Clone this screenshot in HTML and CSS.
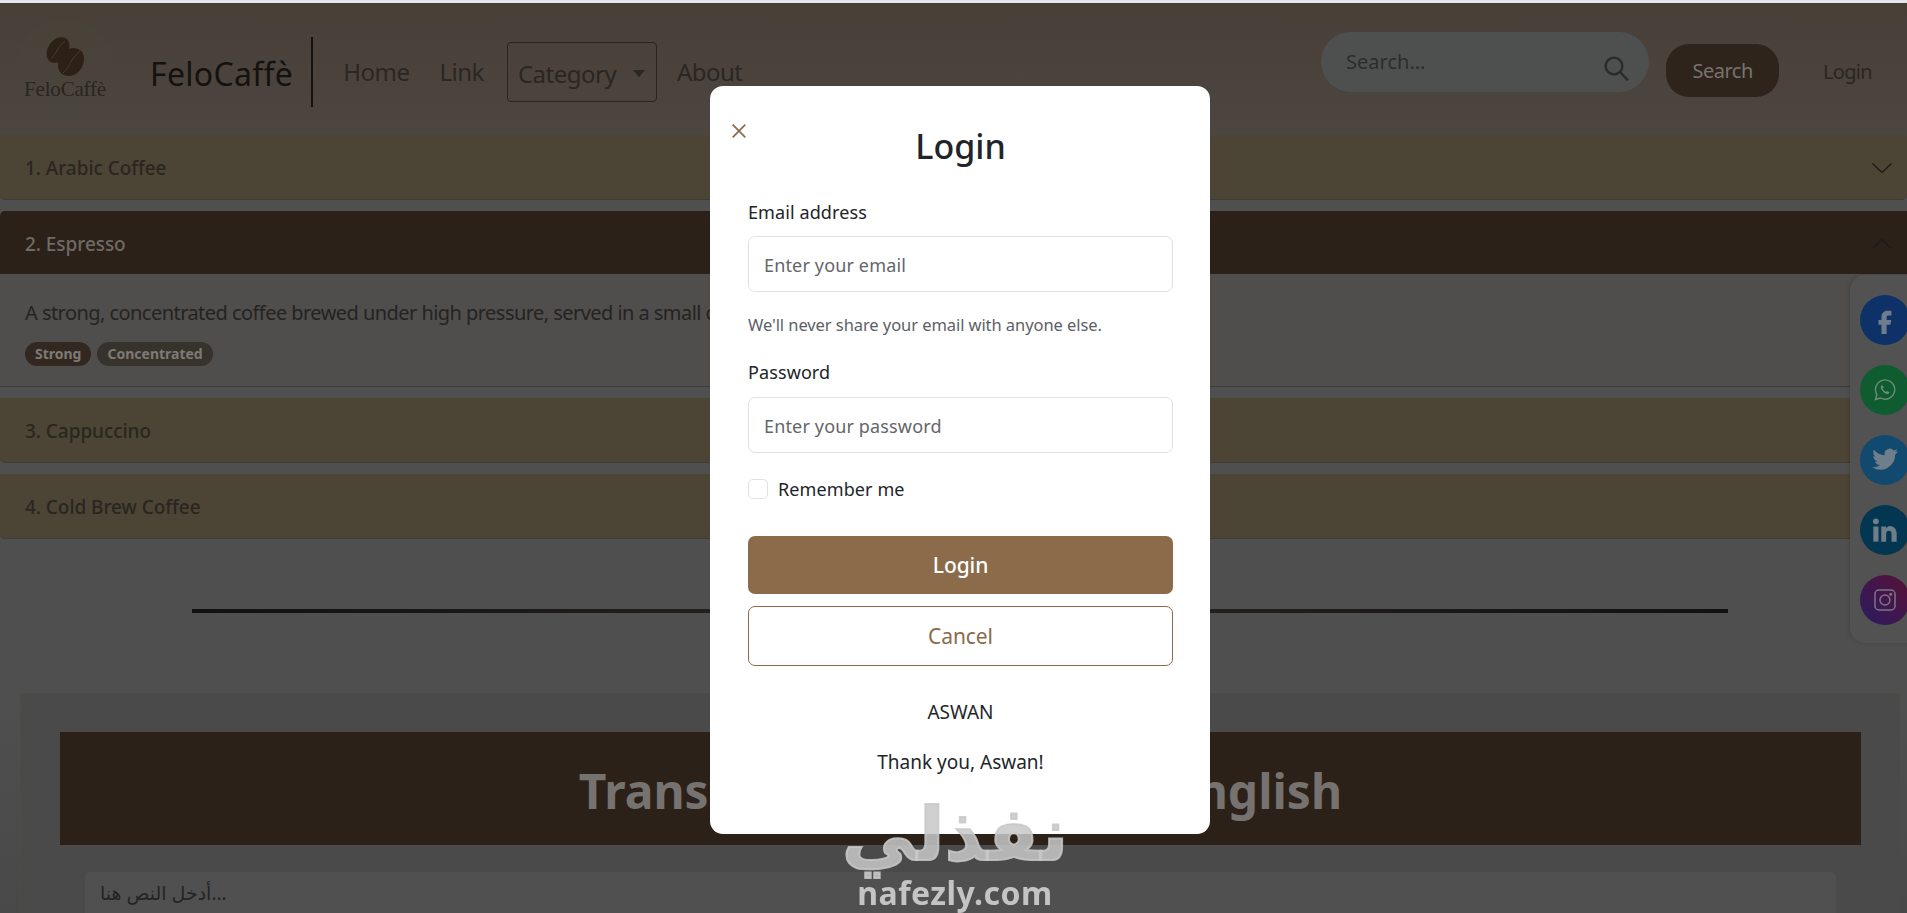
FILE: index.html
```html
<!DOCTYPE html>
<html lang="en">
<head>
<meta charset="utf-8">
<title>FeloCaffè</title>
<link rel="stylesheet" href="styles.css">
</head>
<body>
<header class="navbar">
  <div class="logo">
    <svg class="beans" viewBox="0 0 40 40" width="42" height="40">
      <g fill="#2c2017">
        <ellipse cx="13" cy="13" rx="10" ry="14" transform="rotate(35 13 13)"/>
        <ellipse cx="26" cy="25" rx="12" ry="15" transform="rotate(35 26 25)"/>
      </g>
      <path d="M6 22C12 16 12 10 20 4M18 36C25 30 25 22 35 14" stroke="#453a30" stroke-width="1" fill="none"/>
    </svg>
    <span class="logo-text">FeloCaffè</span>
  </div>
  <a class="brand">FeloCaffè</a>
  <nav class="links">
    <a class="nav-link">Home</a>
    <a class="nav-link">Link</a>
    <a class="nav-drop">Category<i class="caret"></i></a>
    <a class="nav-link">About</a>
  </nav>
  <div class="search-pill">
    <span class="search-text">Search...</span>
    <svg viewBox="0 0 25 25" width="25" height="25" fill="none" stroke="#2a2a2a" stroke-width="2.4"><circle cx="10" cy="10" r="8.4"/><path d="M16 16l8 8.4"/></svg>
  </div>
  <button class="search-btn">Search</button>
  <a class="login-link">Login</a>
</header>

<section class="accordion">
  <div class="acc-head"><span>1. Arabic Coffee</span>
    <svg viewBox="0 0 20 10" width="20" height="10" fill="none" stroke="#1d1a15" stroke-width="1.3"><path d="M.5.5L10 9.5 19.5.5"/></svg></div>
  <div class="acc-head acc-open"><span>2. Espresso</span>
    <svg viewBox="0 0 20 10" width="20" height="10" fill="none" stroke="#1b1b20" stroke-width="1.3"><path d="M.5 9.5L10 .5l9.5 9"/></svg></div>
  <div class="acc-body">
    <p class="acc-text">A strong, concentrated coffee brewed under high pressure, served in a small cup.</p>
    <div class="tags"><span class="tag">Strong</span><span class="tag tag-alt">Concentrated</span></div>
  </div>
  <div class="acc-head acc-third"><span>3. Cappuccino</span></div>
  <div class="acc-head"><span>4. Cold Brew Coffee</span></div>
</section>

<hr class="divider">

<section class="translator">
  <h1 class="tr-head">Translate from Arabic to English</h1>
  <div class="tr-input">أدخل النص هنا...</div>
</section>

<aside class="social">
  <a class="soc soc-fb"><svg viewBox="0 0 24 24" width="28" height="28" fill="#6f7c8e"><path d="M14.5 8.2h3V4h-3.2C11 4 9 6.2 9 9.3V12H6.4v4H9v8h4.4v-8h3.2l.8-4h-4v-2.3c0-.9.3-1.5 1.1-1.5z"/></svg></a>
  <a class="soc soc-wa"><svg viewBox="0 0 24 24" width="24" height="24" fill="none" stroke="#6f8c78" stroke-width="1.4"><path d="M2.5 21.500l1.400-5A9.600 9.600 0 1 1 7.600 20z"/><path d="M8.500 7.500c-1 1-1 2.600.5 4.800 1.500 2.200 3.500 3.700 5.300 3.700 1 0 2-.8 2-1.800l-2.300-1.200-1 1c-1.500-.6-2.800-1.900-3.400-3.400l1-1-1-2.300z" fill="#6f8c78" stroke="none"/></svg></a>
  <a class="soc soc-tw"><svg viewBox="0 0 24 24" width="28" height="28" fill="#6e7f8b"><path d="M23 4.500a9 9 0 0 1-2.600.7 4.500 4.500 0 0 0 2-2.500 9 9 0 0 1-2.900 1.100 4.500 4.500 0 0 0-7.700 4.100A12.800 12.800 0 0 1 2.500 3.200a4.500 4.500 0 0 0 1.400 6 4.500 4.500 0 0 1-2-.6c0 2.200 1.500 4 3.600 4.500a4.500 4.500 0 0 1-2 .1 4.500 4.500 0 0 0 4.200 3.100A9 9 0 0 1 1 18.200 12.700 12.700 0 0 0 20.700 7.500 9 9 0 0 0 23 4.500z"/></svg></a>
  <a class="soc soc-li"><svg viewBox="0 0 24 24" width="28" height="28" fill="#6f7e88"><rect x="2" y="9" width="4.400" height="13"/><circle cx="4.200" cy="4.600" r="2.500"/><path d="M16 8.600a6 6 0 0 1 6 6V22h-4.400v-7a2.300 2.300 0 0 0-4.600 0v7H8.800V9H13v1.900c.8-1.400 1.700-2.300 3-2.300z"/></svg></a>
  <a class="soc soc-ig"><svg viewBox="0 0 24 24" width="24" height="24" fill="none" stroke="#7f7488" stroke-width="1.500"><rect x="2" y="2" width="20" height="20" rx="4"/><circle cx="12" cy="12" r="5"/><circle cx="17.800" cy="6.200" r=".8" fill="#7f7488"/></svg></a>
</aside>

<div class="modal">
  <svg class="close" viewBox="0 0 14 14" width="14" height="14" fill="none" stroke="#8b6b4a" stroke-width="1.700"><path d="M.7.7l12.600 12.600M13.300.7L.7 13.300"/></svg>
  <h2 class="modal-title">Login</h2>
  <label class="field-label">Email address</label>
  <input class="field" type="email" placeholder="Enter your email">
  <p class="help">We'll never share your email with anyone else.</p>
  <label class="field-label field-label-2">Password</label>
  <input class="field field-2" type="password" placeholder="Enter your password">
  <div class="check-row"><span class="check"></span><span>Remember me</span></div>
  <button class="btn-login">Login</button>
  <button class="btn-cancel">Cancel</button>
  <p class="note note-1">ASWAN</p>
  <p class="note note-2">Thank you, Aswan!</p>
</div>

<div class="watermark">
  <span class="wm-ar" lang="ar" dir="rtl">نفذلي</span>
  <span class="wm-en">nafezly.com</span>
</div>
</body>
</html>
```
FILE: styles.css
```css
* { box-sizing: border-box; }
html, body { height: 100%; margin: 0; overflow: hidden; }
body {
  font-family: "Noto Sans", "DejaVu Sans", sans-serif;
  background: linear-gradient(#4f4f4f 0, #4f4f4f 700px, #494949 100%);
  color: #222;
  border-top: 3px solid #e4e7ea;
}

/* navbar */
.navbar {
  height: 132px;
  background: linear-gradient(#483f37, #4d4540);
  display: flex;
  align-items: center;
  padding: 0 35px 4px 16px;
}
.logo {
  width: 100px;
  height: 100px;
  margin-top: 4px;
  border-radius: 50%;
  background: rgba(70, 75, 60, .2);
  display: flex;
  flex-direction: column;
  align-items: center;
  padding-top: 18px;
  flex: none;
  margin-left: -1px;
  margin-right: 35px;
}
.beans { display: block; }
.logo-text {
  font: 21px/18px "Liberation Serif", serif;
  color: #292521;
  letter-spacing: -.2px;
  margin-top: 3px;
}
.brand {
  font-size: 32px;
  line-height: 66px;
  padding: 4px 18px 0 0;
  color: #14120f;
  border-right: 2px solid #14120f;
  letter-spacing: .3px;
  margin-top: 10px;
}
.links { display: flex; align-items: center; margin-left: 30px; margin-top: 8px; }
.nav-link { font-size: 24px; color: #2a2622; letter-spacing: -.5px; }
.nav-link + .nav-link { margin-left: 30px; }
.nav-drop {
  width: 150px;
  height: 60px;
  margin: 2px 20px 0 23px;
  padding: 2px 11px 0 10px;
  border: 1.500px solid #29241f;
  border-radius: 4px;
  display: flex;
  align-items: center;
  justify-content: space-between;
  font-size: 24px;
  letter-spacing: -.5px;
  color: #2a2622;
}
.caret {
  width: 0;
  height: 0;
  border: 6px solid transparent;
  border-top: 7px solid #2a2622;
  border-bottom: 0;
}
.search-pill {
  margin-left: auto;
  width: 328px;
  height: 60px;
  border-radius: 30px;
  background: #4e5050;
  display: flex;
  align-items: center;
  justify-content: space-between;
  padding: 0 20px 0 25px;
  margin-top: -10px;
}
.search-pill svg { margin-top: 12px; }
.search-text { font-size: 20px; color: #2c2c2c; letter-spacing: 0; margin-bottom: 2px; }
.search-btn {
  width: 113px;
  height: 53px;
  margin: 6px 0 0 17px;
  border: 0;
  border-radius: 23px;
  background: #2f241b;
  color: #77736e;
  font: 20px "Noto Sans", sans-serif;
  letter-spacing: -.5px;
}
.login-link {
  margin: 8px 0 0 44px;
  font-size: 20px;
  color: #2a2622;
  letter-spacing: -.7px;
}

/* accordion */
.accordion { width: 100%; }
.acc-head {
  height: 65px;
  padding: 2px 15px 0 25px;
  background: #4c4435;
  border-bottom: 1px solid #3f3c33;
  border-radius: 0 0 5px 5px;
  display: flex;
  align-items: center;
  justify-content: space-between;
  font-size: 19px;
  font-weight: 500;
  color: #2a2620;
  letter-spacing: -.05px;
}
.acc-head + .acc-head { margin-top: 11px; }
.acc-open {
  height: 63px;
  background: #2c2118;
  border: 0;
  border-radius: 5px 0 0 0;
  color: #6e6a66;
}
.acc-body {
  height: 113px;
  background: #4f4e4d;
  border-bottom: 1px solid #3d3d3c;
  padding: 25px 25px 0;
}
.acc-text {
  margin: 0;
  font-size: 20px;
  line-height: 27px;
  color: #242321;
  letter-spacing: -.55px;
}
.tags { display: flex; gap: 6px; margin-top: 16px; }
.tag {
  height: 24px;
  padding: 0 10px;
  border-radius: 12px;
  background: #332820;
  color: #7e7a75;
  font-size: 14px;
  font-weight: 700;
  line-height: 24px;
}
.tag-alt { background: #38322d; }
.acc-third { margin-top: 11px; }

/* divider */
.divider {
  width: 1536px;
  height: 4px;
  margin: 70px 0 0 192px;
  border: 0;
  background: linear-gradient(90deg, #111 0, #2b2622 50%, #111 100%);
}

/* translator */
.translator {
  margin: 80px 7px 0 20px;
  height: 220px;
  padding: 38px 38px 0 39px;
  border: 1px solid #4c4c42;
  border-bottom: 0;
  background: #4a4a4a;
}
.tr-head {
  margin: 0;
  height: 113px;
  background: #2c2118;
  color: #757270;
  font-size: 48px;
  font-weight: 700;
  line-height: 117px;
  text-align: center;
}
.tr-input {
  margin: 27px 25px 0;
  height: 41px;
  background: #505050;
  border-radius: 6px 6px 0 0;
  padding: 6px 15px 0;
  font-size: 19px;
  line-height: 30px;
  color: #242424;
  direction: ltr;
}

/* social */
.social {
  position: fixed;
  top: 275px;
  right: -20px;
  width: 77px;
  height: 368px;
  padding: 20px 0 0 10px;
  border-radius: 15px;
  background: #525252;
  box-shadow: -1px 0 4px rgba(0, 0, 0, .15);
  display: flex;
  flex-direction: column;
  gap: 20px;
}
.soc {
  width: 50px;
  height: 50px;
  border-radius: 50%;
  display: flex;
  align-items: center;
  justify-content: center;
  flex: none;
}
.soc-fb { background: #0e3268; }
.soc-wa { background: #0f5c30; }
.soc-tw { background: #114a6e; }
.soc-li { background: #033650; }
.soc-ig { background: linear-gradient(45deg, #2a1c62, #581136); }

/* modal */
.modal {
  position: fixed;
  left: 710px;
  top: 86px;
  width: 500px;
  height: 748px;
  background: #fff;
  border-radius: 13px;
  padding: 36px 37px 0 38px;
  display: flex;
  flex-direction: column;
  color: #212529;
  font-size: 18px;
}
.close { position: absolute; left: 22px; top: 38px; }
.modal-title {
  margin: 0;
  font-size: 34px;
  font-weight: 500;
  line-height: 48px;
  text-align: center;
}
.field-label { margin-top: 29px; line-height: 26px; letter-spacing: .1px; }
.field-label-2 { margin-top: 22px; }
.field {
  margin-top: 11px;
  height: 56px;
  width: 100%;
  border: 1px solid #dee2e6;
  border-radius: 7px;
  padding: 2px 15px 0;
  font: 18px "Noto Sans", sans-serif;
  letter-spacing: .15px;
  flex: none;
}
.field-2 { margin-top: 12px; }
.field::placeholder { color: #636669; opacity: 1; }
.help {
  margin: 21px 0 0;
  font-size: 16.500px;
  line-height: 24px;
  color: #5c6166;
  letter-spacing: -.07px;
}
.check-row {
  margin-top: 25px;
  display: flex;
  align-items: center;
  gap: 10px;
  height: 22px;
  flex: none;
  letter-spacing: .1px;
}
.check {
  width: 20px;
  height: 20px;
  border: 1px solid #dee2e6;
  border-radius: 5px;
}
.btn-login, .btn-cancel {
  font: 21px "Noto Sans", sans-serif;
  border-radius: 7px;
  flex: none;
  letter-spacing: -.1px;
}
.btn-login {
  margin-top: 36px;
  height: 58px;
  border: 0;
  background: #8b6b4a;
  color: #fff;
  font-weight: 500;
}
.btn-cancel {
  margin-top: 12px;
  height: 60px;
  border: 1px solid #8b6b4a;
  background: #fff;
  color: #8b6b4a;
}
.note { margin: 33px 0 0; font-size: 19px; line-height: 26px; text-align: center; }
.note-2 { margin-top: 24px; }

/* watermark */
.watermark {
  position: fixed;
  left: 830px;
  top: 790px;
  width: 250px;
  display: flex;
  flex-direction: column;
  align-items: center;
  pointer-events: none;
}
.wm-ar {
  font: 700 74px/88px "DejaVu Sans", sans-serif;
  color: rgba(200, 200, 200, .85);
  -webkit-text-stroke: 2px rgba(200, 200, 200, .85);
}
.wm-en {
  font: 700 32px/34px "Noto Sans", sans-serif;
  color: #c4c4c4;
  letter-spacing: .5px;
  margin-top: -2px;
}
```
